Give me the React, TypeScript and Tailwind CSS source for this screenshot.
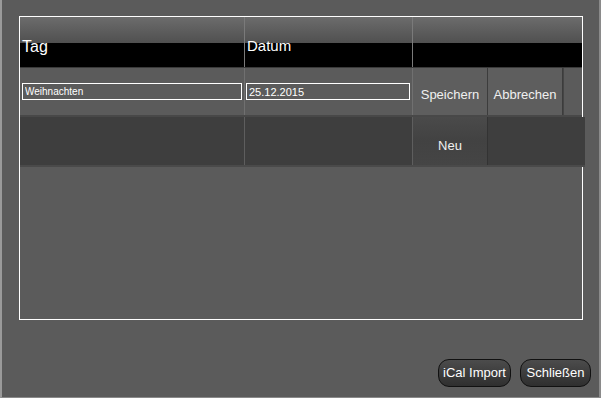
const font = { fontFamily: '"Liberation Sans", Arial, sans-serif' };

function CellButton({ label }: { label: string }) {
  return (
    <button className="flex h-full w-[75px] items-center justify-center whitespace-nowrap border-r border-[#3c3c3c] bg-[#5e5e5e] pt-[7px] text-[13px] text-[#f0f0f0]">
      {label}
    </button>
  );
}

function PillButton({ label, width }: { label: string; width: string }) {
  return (
    <button
      className={`${width} h-[28px] whitespace-nowrap rounded-[11px] border border-[#111] bg-gradient-to-b from-[#4c4c4c] to-[#2f2f2f] text-[13px] text-white`}
    >
      {label}
    </button>
  );
}

export default function App() {
  return (
    <div
      className="flex h-[398px] w-[601px] flex-col border-l-2 border-r-2 border-b border-l-[#9a9a9a] border-r-[#8a8a8a] border-b-[#8a8a8a] bg-[#5b5b5b]"
      style={font}
    >
      <div className="ml-[17px] mr-[16px] mt-[16px] h-[304px] border border-white">
        {/* header */}
        <div className="grid h-[51px] grid-cols-[225px_168px_1fr] border-b border-[#3a3a3a]">
          <div className="relative flex flex-col border-r border-[#7a7a7a]">
            <div className="h-[26px] bg-gradient-to-b from-[#6c6c6c] to-[#505050]" />
            <div className="flex-1 bg-black" />
            <span className="absolute left-[2px] top-[18px] text-[16px] text-white">Tag</span>
          </div>
          <div className="relative flex flex-col border-r border-[#7a7a7a]">
            <div className="h-[26px] bg-gradient-to-b from-[#6c6c6c] to-[#505050]" />
            <div className="flex-1 bg-black" />
            <span className="absolute left-[2px] top-[18px] text-[15px] text-white">Datum</span>
          </div>
          <div className="flex flex-col">
            <div className="h-[26px] bg-gradient-to-b from-[#6c6c6c] to-[#505050]" />
            <div className="flex-1 bg-black" />
          </div>
        </div>
        {/* row 1 */}
        <div className="grid h-[49px] grid-cols-[225px_168px_1fr] border-b-2 border-[#484848]">
          <div className="flex items-center border-r border-[#707070] pl-[2px] pr-[2px]">
            <input
              defaultValue="Weihnachten"
              className="h-[17px] w-full border border-white bg-transparent px-[2px] text-[10px] text-white outline-none"
            />
          </div>
          <div className="flex items-center border-r border-[#707070] pl-[1px] pr-[2px]">
            <input
              defaultValue="25.12.2015"
              className="h-[17px] w-full border border-white bg-transparent px-[2px] text-[11px] text-white outline-none"
            />
          </div>
          <div className="flex">
            <CellButton label="Speichern" />
            <CellButton label="Abbrechen" />
            <div className="flex-1 border-l border-[#454545]" />
          </div>
        </div>
        {/* row 2 */}
        <div className="-mr-[3px] grid h-[50px] grid-cols-[225px_168px_75px_1fr] border-b-2 border-[#4a4a4a] bg-[#3e3e3e]">
          <div className="border-r border-[#5e5e5e]" />
          <div className="border-r border-[#5e5e5e]" />
          <button className="flex items-center justify-center border-r border-[#333] bg-gradient-to-b from-[#4a4a4a] via-[#424242] to-[#454545] pt-[9px] text-[13px] text-[#f0f0f0]">
            Neu
          </button>
          <div />
        </div>
      </div>
      <div className="mt-[39px] flex justify-end gap-[9px] pr-[8px]">
        <PillButton label="iCal Import" width="w-[73px]" />
        <PillButton label="Schließen" width="w-[71px]" />
      </div>
    </div>
  );
}
